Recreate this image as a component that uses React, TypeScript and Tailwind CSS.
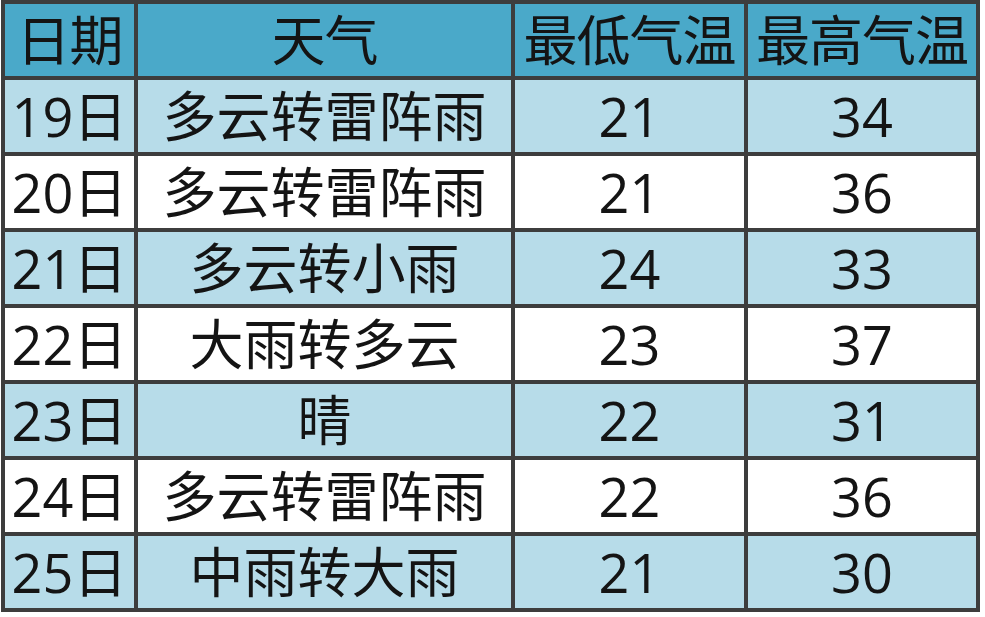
const rows = [
  ['19日', '多云转雷阵雨', '21', '34'],
  ['20日', '多云转雷阵雨', '21', '36'],
  ['21日', '多云转小雨', '24', '33'],
  ['22日', '大雨转多云', '23', '37'],
  ['23日', '晴', '22', '31'],
  ['24日', '多云转雷阵雨', '22', '36'],
  ['25日', '中雨转大雨', '21', '30'],
];

const headers = ['日期', '天气', '最低气温', '最高气温'];

export default function App() {
  return (
    <div
      className="w-[985px] h-[617px] bg-white text-[#141414]"
      style={{ fontFamily: '"Open Sans", "Noto Sans CJK SC", sans-serif' }}
    >
      <div className="ml-[1px] w-[979px] bg-[#3d3d3d] p-[4px] grid grid-cols-[129px_373px_229px_228px] auto-rows-[72px] gap-[4px] text-[54px] leading-none">
        {headers.map((h) => (
          <div key={h} className="bg-[#4aa9c9] flex items-center justify-center whitespace-nowrap tracking-[-1px]">
            {h}
          </div>
        ))}
        {rows.map((r, i) =>
          r.map((c, j) => (
            <div
              key={i + '-' + j}
              className={`${i % 2 === 0 ? 'bg-[#b7dce9]' : 'bg-white'} flex items-center justify-center whitespace-nowrap`}
            >
              {c}
            </div>
          ))
        )}
      </div>
    </div>
  );
}
